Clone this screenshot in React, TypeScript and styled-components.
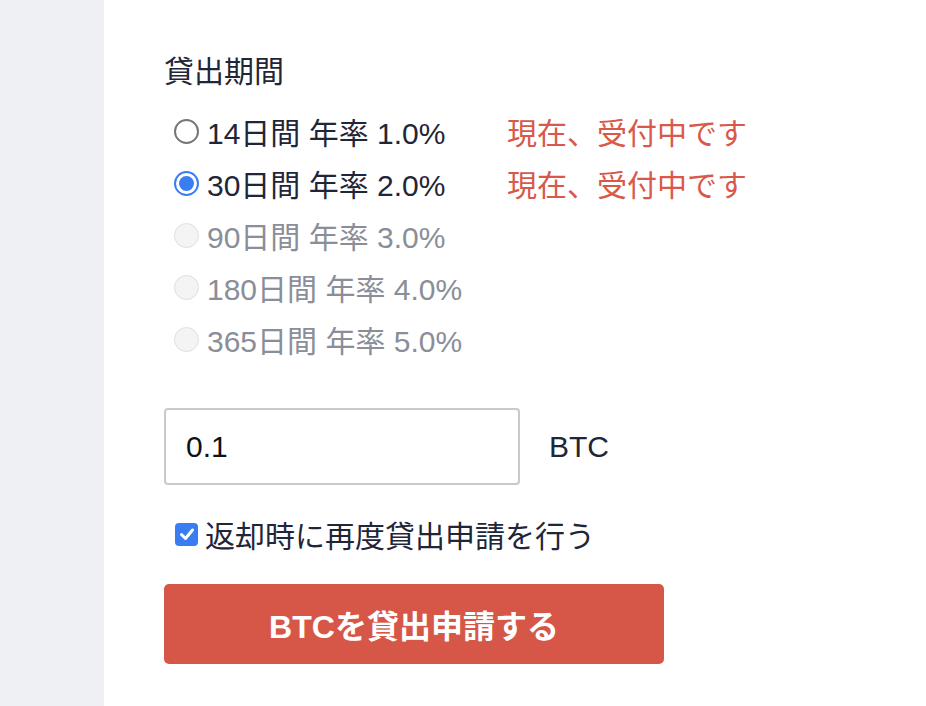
import React from "react";
import styled, { createGlobalStyle } from "styled-components";

const Global = createGlobalStyle`
  html, body { margin: 0; padding: 0; background: #ffffff; }
  body { font-family: "Liberation Sans", "Noto Sans CJK JP", sans-serif; }
`;

const Page = styled.div`
  display: flex;
  width: 926px;
  height: 706px;
  overflow: hidden;
`;

const Sidebar = styled.div`
  width: 104px;
  flex: 0 0 104px;
  background: #eef0f4;
`;

const Main = styled.div`
  flex: 1;
  padding: 54px 0 0 60px;
  color: #1f2638;
`;

const Heading = styled.div`
  font-size: 30px;
  line-height: 36px;
  margin-bottom: 15px;
`;

const Options = styled.div`
  display: flex;
  flex-direction: column;
`;

const OptionRow = styled.label<{ $disabled?: boolean }>`
  display: grid;
  grid-template-columns: 343px auto;
  align-items: center;
  height: 52px;
  font-size: 30px;
  color: ${(p) => (p.$disabled ? "#8a8e98" : "#1f2638")};
`;

const OptionMain = styled.span`
  display: flex;
  align-items: center;
  padding-left: 10px;
`;

const Radio = styled.span<{ $state: "off" | "on" | "disabled" }>`
  box-sizing: border-box;
  width: 25px;
  height: 25px;
  border-radius: 50%;
  margin-right: 8px;
  flex: 0 0 25px;
  background: ${(p) => (p.$state === "disabled" ? "#f4f4f5" : "#ffffff")};
  border: ${(p) =>
    p.$state === "on"
      ? "2px solid #3a7df2"
      : p.$state === "disabled"
      ? "1.5px solid #dedfe2"
      : "2px solid #767676"};
  display: flex;
  align-items: center;
  justify-content: center;
  &::after {
    content: "";
    display: ${(p) => (p.$state === "on" ? "block" : "none")};
    width: 15px;
    height: 15px;
    border-radius: 50%;
    background: #3a7df2;
  }
`;

const Status = styled.span`
  color: #d9584a;
  font-size: 30px;
`;

const AmountRow = styled.div`
  display: flex;
  align-items: center;
  margin-top: 43px;
  gap: 29px;
`;

const AmountInput = styled.div`
  box-sizing: border-box;
  width: 356px;
  height: 77px;
  border: 2px solid #c9c9cb;
  border-radius: 4px;
  padding: 0 20px;
  display: flex;
  align-items: center;
  font-size: 30px;
  color: #111111;
`;

const Unit = styled.span`
  font-size: 30px;
  color: #1f2638;
`;

const CheckRow = styled.label`
  display: flex;
  align-items: center;
  height: 52px;
  margin-top: 23px;
  padding-left: 11px;
  font-size: 30px;
`;

const CheckBox = styled.span`
  width: 23px;
  height: 23px;
  border-radius: 4px;
  background: #3a7df2;
  margin-right: 7px;
  display: flex;
  align-items: center;
  justify-content: center;
`;

const SubmitButton = styled.button`
  margin-top: 24px;
  width: 500px;
  height: 80px;
  border: none;
  border-radius: 5px;
  background: #d65747;
  color: #ffffff;
  font-family: "Liberation Sans", "Noto Sans CJK JP", sans-serif;
  font-weight: 700;
  font-size: 32px;
  display: flex;
  align-items: center;
  justify-content: center;
  padding: 0;
`;

type Opt = { label: string; state: "off" | "on" | "disabled"; status?: string };

const opts: Opt[] = [
  { label: "14日間 年率 1.0%", state: "off", status: "現在、受付中です" },
  { label: "30日間 年率 2.0%", state: "on", status: "現在、受付中です" },
  { label: "90日間 年率 3.0%", state: "disabled" },
  { label: "180日間 年率 4.0%", state: "disabled" },
  { label: "365日間 年率 5.0%", state: "disabled" },
];

export default function App() {
  return (
    <Page>
      <Global />
      <Sidebar />
      <Main>
        <Heading>貸出期間</Heading>
        <Options>
          {opts.map((o) => (
            <OptionRow key={o.label} $disabled={o.state === "disabled"}>
              <OptionMain>
                <Radio $state={o.state} />
                {o.label}
              </OptionMain>
              {o.status ? <Status>{o.status}</Status> : <span />}
            </OptionRow>
          ))}
        </Options>
        <AmountRow>
          <AmountInput>0.1</AmountInput>
          <Unit>BTC</Unit>
        </AmountRow>
        <CheckRow>
          <CheckBox>
            <svg width="18" height="18" viewBox="0 0 18 18">
              <path d="M3.5 9.5 L7.5 13.5 L14.5 5" fill="none" stroke="#fff" strokeWidth="3" strokeLinecap="round" strokeLinejoin="round" />
            </svg>
          </CheckBox>
          返却時に再度貸出申請を行う
        </CheckRow>
        <SubmitButton>BTCを貸出申請する</SubmitButton>
      </Main>
    </Page>
  );
}
